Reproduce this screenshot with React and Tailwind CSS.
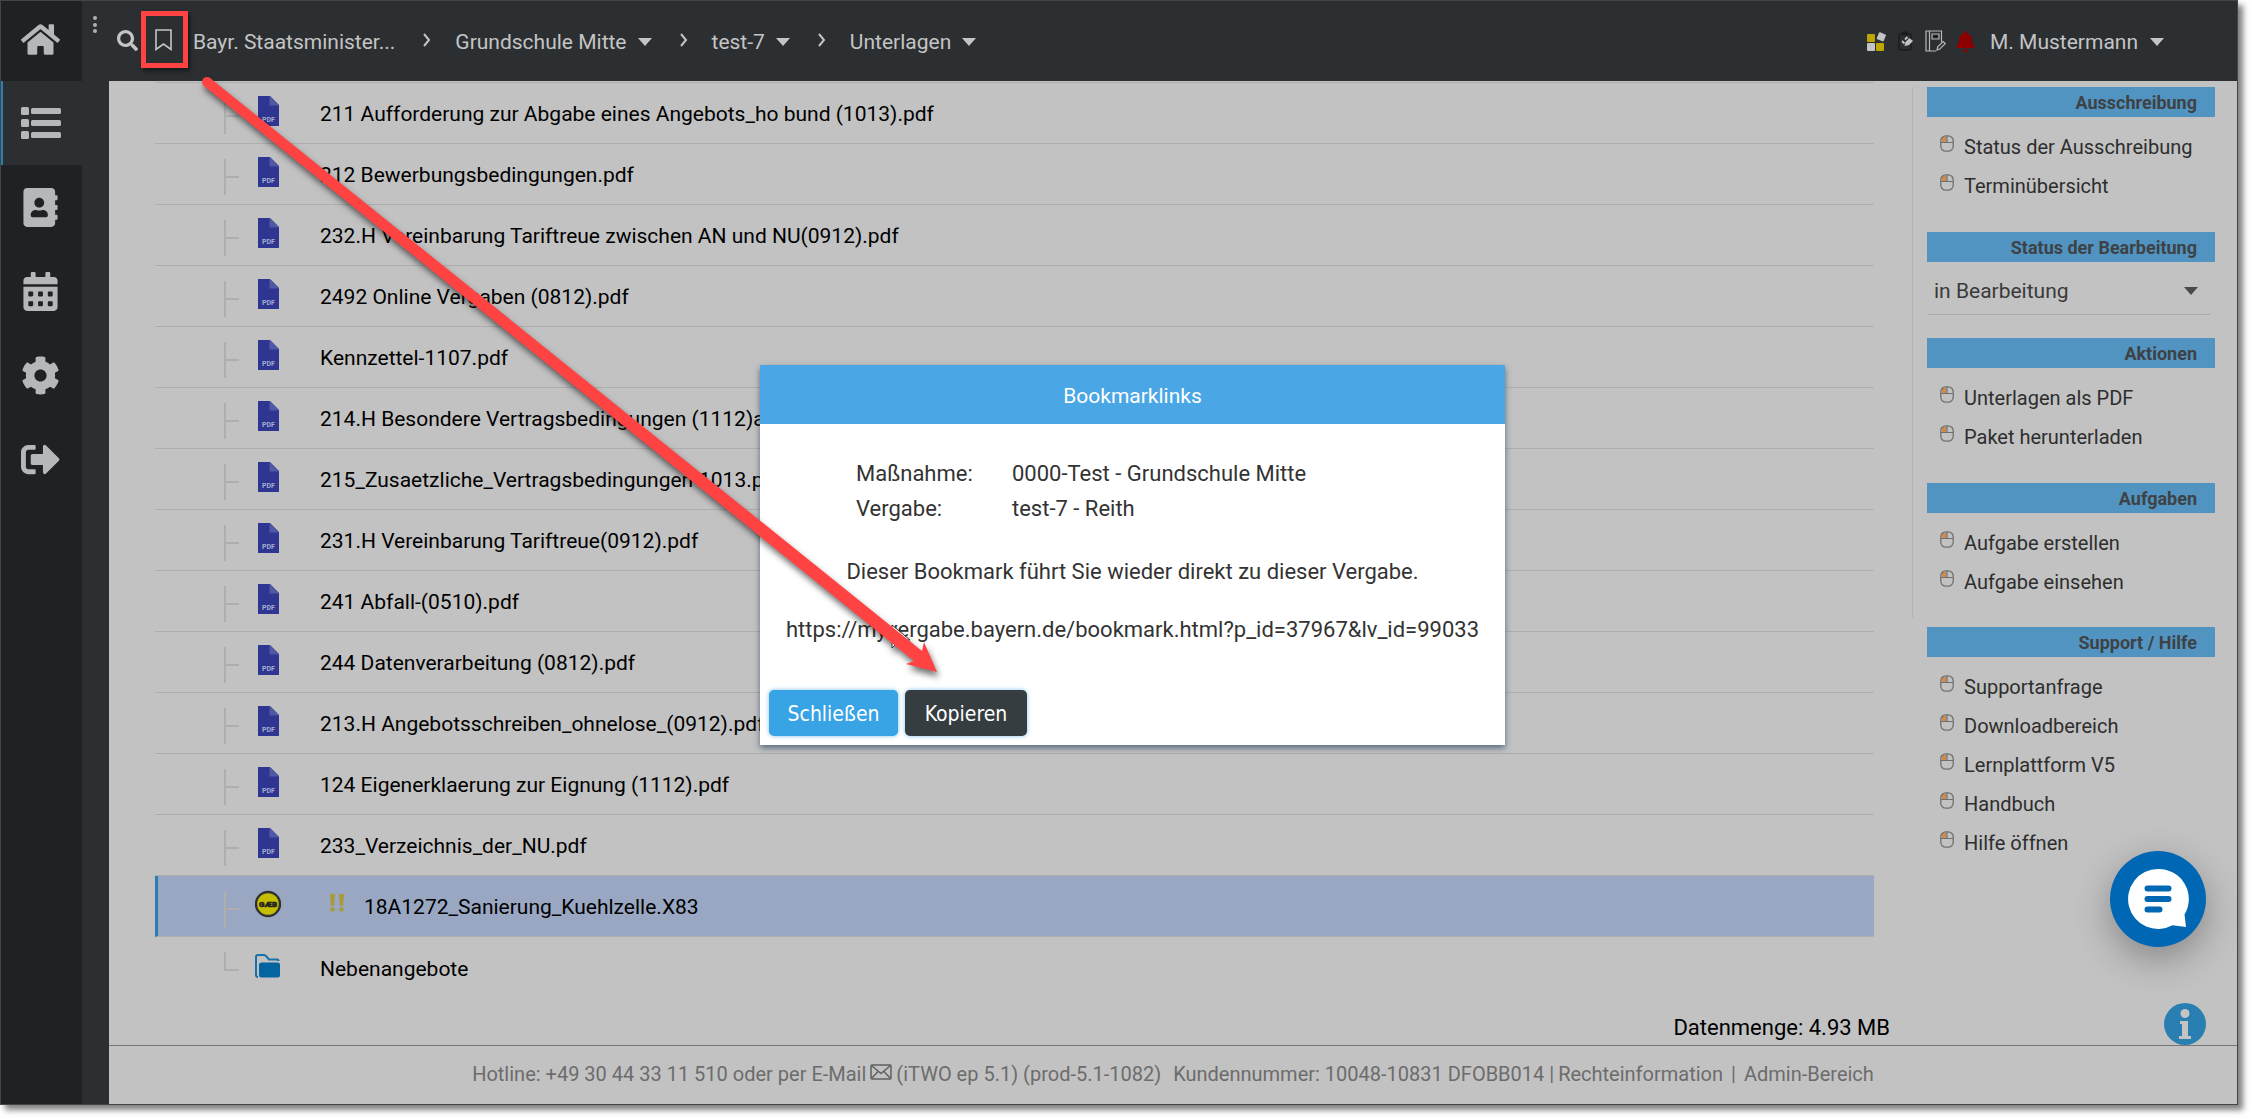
import React from "react";
import {
  FaHome,
  FaAddressBook,
  FaCalendarAlt,
  FaCog,
  FaSignOutAlt,
  FaSearch,
  FaBell,
} from "react-icons/fa";

const files = [
  "211 Aufforderung zur Abgabe eines Angebots_ho bund (1013).pdf",
  "212 Bewerbungsbedingungen.pdf",
  "232.H Vereinbarung Tariftreue zwischen AN und NU(0912).pdf",
  "2492 Online Vergaben (0812).pdf",
  "Kennzettel-1107.pdf",
  "214.H Besondere Vertragsbedingungen (1112)a.pdf",
  "215_Zusaetzliche_Vertragsbedingungen-1013.pdf",
  "231.H Vereinbarung Tariftreue(0912).pdf",
  "241 Abfall-(0510).pdf",
  "244 Datenverarbeitung (0812).pdf",
  "213.H Angebotsschreiben_ohnelose_(0912).pdf",
  "124 Eigenerklaerung zur Eignung (1112).pdf",
  "233_Verzeichnis_der_NU.pdf",
];

function Caret({ className = "text-[#c4c4c4]" }) {
  return (
    <svg width="14" height="8" viewBox="0 0 14 8" className={className} aria-hidden="true">
      <path d="M0 0h14L7 8z" fill="currentColor" />
    </svg>
  );
}

function Chevron() {
  return (
    <svg width="8" height="14" viewBox="0 0 8 14" fill="none" stroke="#c4c4c4" strokeWidth="2" className="-mt-1" aria-hidden="true">
      <path d="M1 1l5 6-5 6" />
    </svg>
  );
}

function ListIcon() {
  return (
    <svg width="40" height="32" viewBox="0 0 40 32" fill="#b5b7b8" aria-hidden="true">
      {[0, 12, 24].map((y) => (
        <g key={y}>
          <rect x="0" y={y} width="8" height="8" rx="1.5" />
          <rect x="10" y={y + 1} width="30" height="6" rx="1.5" />
        </g>
      ))}
    </svg>
  );
}

function PdfIcon() {
  return (
    <svg width="21" height="30" viewBox="0 0 21 30" aria-hidden="true">
      <path d="M0 0h12l9 9v21H0z" fill="#2e3691" />
      <path d="M11.5 0L21 9.5h-9.5z" fill="#5059a3" />
      <text x="10.5" y="25.5" textAnchor="middle" fontSize="7" fontWeight="700" fill="#a9add0" className="font-[Roboto]">PDF</text>
    </svg>
  );
}

function GaebIcon() {
  return (
    <svg width="28" height="28" viewBox="0 0 28 28" aria-hidden="true">
      <circle cx="14" cy="14" r="12" fill="#c4bd00" stroke="#2f3234" strokeWidth="2.4" />
      <text x="14" y="17" textAnchor="middle" fontSize="8" fontWeight="900" fill="#222" stroke="#222" strokeWidth="0.5" className="font-[Roboto]">GÆB</text>
    </svg>
  );
}

function FolderIcon() {
  return (
    <svg width="26" height="24" viewBox="0 0 26 24" aria-hidden="true">
      <path d="M3 23Q1 23 1 20.5V3Q1 1 3 1h6q1 0 2 1l3 3.5h8q1.500 0 1.500 1.500" fill="none" stroke="#1672a8" strokeWidth="2" />
      <rect x="4" y="8.500" width="21" height="15" rx="2.500" fill="#04649f" />
    </svg>
  );
}

function Exclamations() {
  return (
    <svg width="14" height="18" viewBox="0 0 14 18" fill="#a79b33" aria-hidden="true">
      <path d="M0 0h5l-1 12H1zM9 0h5l-1 12h-3z" />
      <rect x="0.500" y="13.500" width="4" height="4" rx="1" />
      <rect x="9.500" y="13.500" width="4" height="4" rx="1" />
    </svg>
  );
}

function Branch({ last = false }) {
  return (
    <span className="flex h-9 w-[15px] shrink-0 flex-col">
      <span className="h-[19px] w-full border-b-2 border-l-2 border-[#aeaeae]" />
      {!last && <span className="w-full flex-1 border-l-2 border-[#aeaeae]" />}
    </span>
  );
}

function Row({ icon, marker, label, selected = false, last = false }) {
  const tone = selected
    ? "border-b border-[#b0b0b0] border-l-[3px] border-l-[#2a7fb2] bg-[#99a7c3] pl-[66px]"
    : last
      ? "pl-[69px]"
      : "border-b border-[#aeaeae] pl-[69px]";
  return (
    <li className={"flex h-[61px] items-center text-[21px] leading-6 text-black " + tone}>
      <span className="mt-[5px]">
        <Branch last={last} />
      </span>
      <span className="mb-1 ml-[15px] flex w-7 shrink-0 justify-center">{icon}</span>
      {marker && <span className="mb-[6px] ml-12">{marker}</span>}
      <a href="#" className={"mt-0.5 whitespace-nowrap " + (marker ? "ml-5" : "ml-[38px]")}>{label}</a>
    </li>
  );
}

function MouseIcon() {
  return (
    <svg width="14" height="17" viewBox="0 0 14 17" fill="none" aria-hidden="true">
      <rect x="2" y="2" width="4.500" height="5" fill="#cf8a50" />
      <rect x="0.800" y="0.800" width="12.400" height="15.400" rx="5" stroke="#707070" strokeWidth="1.300" />
      <path d="M1 7.500h12M7 1v6.500" stroke="#707070" strokeWidth="1.200" />
    </svg>
  );
}

function PanelTitle({ children }) {
  return (
    <h2 className="h-[30px] bg-[#5194c1] pr-[18px] text-right text-[18px] leading-[31px] font-bold text-[#3e4245]">{children}</h2>
  );
}

function PanelLinks({ items }) {
  return (
    <ul className="mt-[10px]">
      {items.map((t) => (
        <li key={t}>
          <a href="#" className="flex h-[39px] items-center gap-[10px] pl-[13px] text-[20px] leading-6 text-[#2e2e2e]">
            <span className="mb-[6px]"><MouseIcon /></span>
            {t}
          </a>
        </li>
      ))}
    </ul>
  );
}

function NavItem({ label, active = false, home = false, children }) {
  const box = home
    ? "h-20 bg-[#1e2224] pb-1 pr-0.5"
    : active
      ? "h-[84px] border-l-2 border-[#2b7fb5] bg-[#2b2f32] pr-1"
      : "h-[84px] pr-0.5";
  return (
    <button type="button" aria-label={label} className={"flex w-full items-center justify-center text-[#b5b7b8] " + box}>
      {children}
    </button>
  );
}

function Crumb({ children }) {
  return (
    <button type="button" className="flex items-center gap-[11px] whitespace-nowrap">
      {children}
      <Caret />
    </button>
  );
}

function Header() {
  return (
    <header className="flex h-20 shrink-0 items-center bg-[#2b2f32] text-[21px] leading-6 text-[#c4c4c4]">
      <button type="button" aria-label="Menü" className="mb-8 ml-[11px]">
        <svg width="4" height="18" viewBox="0 0 4 18" fill="#b0b0b0">
          <circle cx="2" cy="2" r="2" />
          <circle cx="2" cy="9" r="2" />
          <circle cx="2" cy="15" r="2" />
        </svg>
      </button>
      <button type="button" aria-label="Suche" className="mb-0.5 ml-5 text-[21px]">
        <FaSearch />
      </button>
      <button type="button" aria-label="Bookmark" className="relative mb-0.5 ml-[17px] h-[22px] w-[17px]">
        <svg width="17" height="22" viewBox="0 0 17 22" fill="none" stroke="#c4c4c4" strokeWidth="1.600" aria-hidden="true">
          <path d="M1 1h15v19.500l-7.500-5.500L1 20.500z" />
        </svg>
        <span className="absolute -top-[18px] -left-[14px] h-[57px] w-[47px] border-[5px] border-[#ff4343] shadow-[2px_3px_4px_rgba(0,0,0,0.5)]" />
      </button>
      <nav className="mt-0.5 ml-[21px] flex items-center">
        <a href="#" className="whitespace-nowrap">Bayr. Staatsminister...</a>
        <span className="mr-6 ml-7"><Chevron /></span>
        <Crumb>Grundschule Mitte</Crumb>
        <span className="mr-6 ml-7"><Chevron /></span>
        <Crumb>test-7</Crumb>
        <span className="mr-6 ml-7"><Chevron /></span>
        <Crumb>Unterlagen</Crumb>
      </nav>
      <div className="ml-auto flex items-center pr-[73px]">
        <button type="button" aria-label="Widgets">
          <svg width="20" height="19" viewBox="0 0 20 19" aria-hidden="true">
            <rect x="0" y="2" width="8" height="8" rx="1" fill="#bfa500" />
            <rect x="0" y="11" width="8" height="8" rx="1" fill="#c4c4c4" />
            <rect x="9" y="11" width="8" height="8" rx="1" fill="#bfa500" />
            <rect x="10.500" y="1" width="7.500" height="7.500" rx="1" fill="#c4c4c4" transform="rotate(22 14 5)" />
          </svg>
        </button>
        <button type="button" aria-label="Notizen" className="ml-[11px]">
          <svg width="16" height="20" viewBox="0 0 16 20" aria-hidden="true">
            <rect x="1" y="3" width="12" height="16" rx="1.500" fill="none" stroke="#1b1e20" strokeWidth="1.600" />
            <rect x="4" y="0.500" width="6" height="4" rx="1" fill="#1b1e20" />
            <path d="M6.500 15l1-4 4-4 3.500 3-4 4z" fill="#c4c4c4" />
            <path d="M4 10l2.500 2.500M7 8.500l2.500-2.500" stroke="#c4c4c4" strokeWidth="1.800" />
          </svg>
        </button>
        <button type="button" aria-label="Protokoll" className="ml-[11px]">
          <svg width="21" height="22" viewBox="0 0 21 22" fill="none" stroke="#b8b8b8" strokeWidth="1.200" aria-hidden="true">
            <path d="M11 21H1V1h15.500v11M4.500 1v20M7 4h7v5H7z" />
            <path d="M12 20l.7-3.200 5.500-5.200 2 2-5.500 5.500z" />
            <path d="M8.500 6.500h4" stroke="#111" />
          </svg>
        </button>
        <button type="button" aria-label="Meldungen" className="ml-[9px] text-[21px] text-[#8b0000]">
          <FaBell />
        </button>
        <button type="button" className="mt-0.5 ml-[14px] flex items-center gap-3 whitespace-nowrap">
          M. Mustermann
          <Caret />
        </button>
      </div>
    </header>
  );
}

function SidePanel() {
  return (
    <aside className="mr-[22px] ml-[38px] w-[303px] shrink-0 pt-[6px]">
      <div className="border-l border-[#b2b2b2] pb-[17px] pl-[14px]">
        <PanelTitle>Ausschreibung</PanelTitle>
        <PanelLinks items={["Status der Ausschreibung", "Terminübersicht"]} />
        <div className="mt-[27px]">
          <PanelTitle>Status der Bearbeitung</PanelTitle>
          <div className="mr-[5px] ml-px flex h-[53px] items-center border-b border-[#aaaaaa] pr-3 pt-[6px]">
            <select aria-label="Status der Bearbeitung" className="min-w-0 flex-1 appearance-none bg-transparent pl-[6px] text-[21px] leading-6 text-[#3a3a3a]">
              <option>in Bearbeitung</option>
            </select>
            <Caret className="text-[#4a4a4a]" />
          </div>
        </div>
        <div className="mt-[23px]">
          <PanelTitle>Aktionen</PanelTitle>
          <PanelLinks items={["Unterlagen als PDF", "Paket herunterladen"]} />
        </div>
        <div className="mt-[27px]">
          <PanelTitle>Aufgaben</PanelTitle>
          <PanelLinks items={["Aufgabe erstellen", "Aufgabe einsehen"]} />
        </div>
      </div>
      <div className="mt-[9px] pl-[15px]">
        <PanelTitle>Support / Hilfe</PanelTitle>
        <PanelLinks items={["Supportanfrage", "Downloadbereich", "Lernplattform V5", "Handbuch", "Hilfe öffnen"]} />
      </div>
    </aside>
  );
}

function Dialog() {
  return (
    <div className="absolute inset-0 flex items-center justify-center pb-[11px] pl-3">
      <section role="dialog" aria-labelledby="dialog-title" className="w-[745px] bg-white text-[22px] leading-6 text-[#333333] shadow-[0_3px_6px_rgba(40,70,100,0.7)]">
        <h1 id="dialog-title" className="bg-[#4aa6e5] pt-[19px] pb-4 text-center text-[21px] leading-6 text-white">Bookmarklinks</h1>
        <dl className="mt-[38px] ml-24 grid grid-cols-[156px_1fr] gap-y-[11px]">
          <dt>Maßnahme:</dt>
          <dd>0000-Test - Grundschule Mitte</dd>
          <dt>Vergabe:</dt>
          <dd>test-7 - Reith</dd>
        </dl>
        <p className="mt-[39px] text-center">Dieser Bookmark führt Sie wieder direkt zu dieser Vergabe.</p>
        <p className="mt-[34px] text-center whitespace-nowrap">https://myvergabe.bayern.de/bookmark.html?p_id=37967&amp;lv_id=99033</p>
        <div className="mt-12 flex gap-[7px] pb-[9px] pl-[9px] font-['DejaVu_Sans_Condensed','Noto_Sans',sans-serif] text-[21px] text-white">
          <button type="button" className="h-[46px] w-[129px] rounded-[5px] bg-[#38a3e5] pt-0.5 shadow-[0_0_4px_#7cc0ea]">Schließen</button>
          <button type="button" className="h-[46px] w-[122px] rounded-[5px] bg-[#363d40] pt-0.5 shadow-[0_0_4px_#7cc0ea]">Kopieren</button>
        </div>
      </section>
    </div>
  );
}

function Arrow() {
  return (
    <svg width="960" height="700" viewBox="0 0 960 700" className="pointer-events-none absolute top-0 left-0 drop-shadow-[2px_5px_3px_rgba(0,0,0,0.55)]" aria-hidden="true">
      <path d="M892 625v23l6-6 4 8 4-2-4-8h8z" fill="#fff" stroke="#333" strokeWidth="1" />
      <path d="M210 78L922 651L924 642L937 672L906 664L914 661L204 86Z" fill="#ff4343" />
      <circle cx="207" cy="82" r="5" fill="#ff4343" />
    </svg>
  );
}

export default function App() {
  return (
    <div className="flex min-h-screen bg-white pr-[15px] pb-[15px] font-[Roboto,sans-serif]">
      <div className="relative flex min-w-0 flex-1 border border-[#454545] bg-[#c2c2c2] shadow-[5px_5px_6px_rgba(0,0,0,0.5)]">
        <nav aria-label="Hauptmenü" className="w-[81px] shrink-0 bg-[#1e2224]">
          <NavItem label="Start" home><FaHome size={39} /></NavItem>
          <NavItem label="Liste" active><ListIcon /></NavItem>
          <NavItem label="Adressbuch"><FaAddressBook size={39} /></NavItem>
          <NavItem label="Kalender"><FaCalendarAlt size={39} /></NavItem>
          <NavItem label="Einstellungen"><FaCog size={39} /></NavItem>
          <NavItem label="Abmelden"><FaSignOutAlt size={39} /></NavItem>
        </nav>
        <div className="flex min-w-0 flex-1 flex-col">
          <Header />
          <div className="flex flex-1">
            <div className="w-[27px] shrink-0 bg-[#2b2f32]" />
            <div className="flex min-w-0 flex-1 flex-col">
              <main className="relative flex flex-1">
                <div className="ml-[46px] flex min-w-0 flex-1 flex-col pt-px">
                  <ul className="border-t border-[#aeaeae]">
                    {files.map((f) => (
                      <Row key={f} icon={<PdfIcon />} label={f} />
                    ))}
                    <Row selected icon={<GaebIcon />} marker={<Exclamations />} label="18A1272_Sanierung_Kuehlzelle.X83" />
                    <Row last icon={<FolderIcon />} label="Nebenangebote" />
                  </ul>
                  <p className="mt-auto -mr-4 pb-[5px] text-right text-[22px] leading-6 text-black">Datenmenge: 4.93 MB</p>
                </div>
                <SidePanel />
                <button type="button" aria-label="Information" className="absolute right-[31px] bottom-0">
                  <svg width="42" height="42" viewBox="0 0 42 42" aria-hidden="true">
                    <circle cx="21" cy="21" r="21" fill="#297fb1" />
                    <circle cx="21" cy="10.500" r="4.500" fill="#c4c4c4" />
                    <path d="M16 18h8v15h3v3H15v-3h3V21h-2z" fill="#c4c4c4" />
                  </svg>
                </button>
              </main>
              <footer className="flex h-[59px] items-center justify-center border-t border-[#777777] pb-0.5 text-[20px] leading-6 text-[#6c6c6c]">
                <span>Hotline: +49 30 44 33 11 510 oder per E-Mail</span>
                <a href="#" aria-label="E-Mail" className="mx-1 mb-1">
                  <svg width="22" height="16" viewBox="0 0 22 16" fill="none" stroke="#606060" strokeWidth="1.500" aria-hidden="true">
                    <rect x="1" y="1" width="20" height="14" rx="1" />
                    <path d="M1.500 1.500L11 9.500l9.500-8M1.500 14.500L8 7.500M20.500 14.500L14 7.500" />
                  </svg>
                </a>
                <span>(iTWO ep 5.1) (prod-5.1-1082)</span>
                <span className="mr-1 ml-3">Kundennummer: 10048-10831 DFOBB014 |</span>
                <a href="#">Rechteinformation</a>
                <span className="mx-2">|</span>
                <a href="#">Admin-Bereich</a>
              </footer>
            </div>
          </div>
        </div>
        <button type="button" aria-label="Chat öffnen" className="absolute right-[31px] bottom-[157px] z-10 flex size-24 items-center justify-center rounded-full bg-[#0067b5] shadow-[0_12px_36px_rgba(0,0,0,0.3)]">
          <svg width="62" height="62" viewBox="0 0 62 62" aria-hidden="true">
            <path d="M31 1A30 30 0 1 0 45.500 57.300L59 59L57.500 46.500A30 30 0 0 0 31 1z" fill="#fff" />
            <path d="M20.500 20.500h21M20.500 31h21M20.500 41.500h12" stroke="#0067b5" strokeWidth="6" strokeLinecap="round" />
          </svg>
        </button>
      </div>
      <Dialog />
      <Arrow />
    </div>
  );
}
